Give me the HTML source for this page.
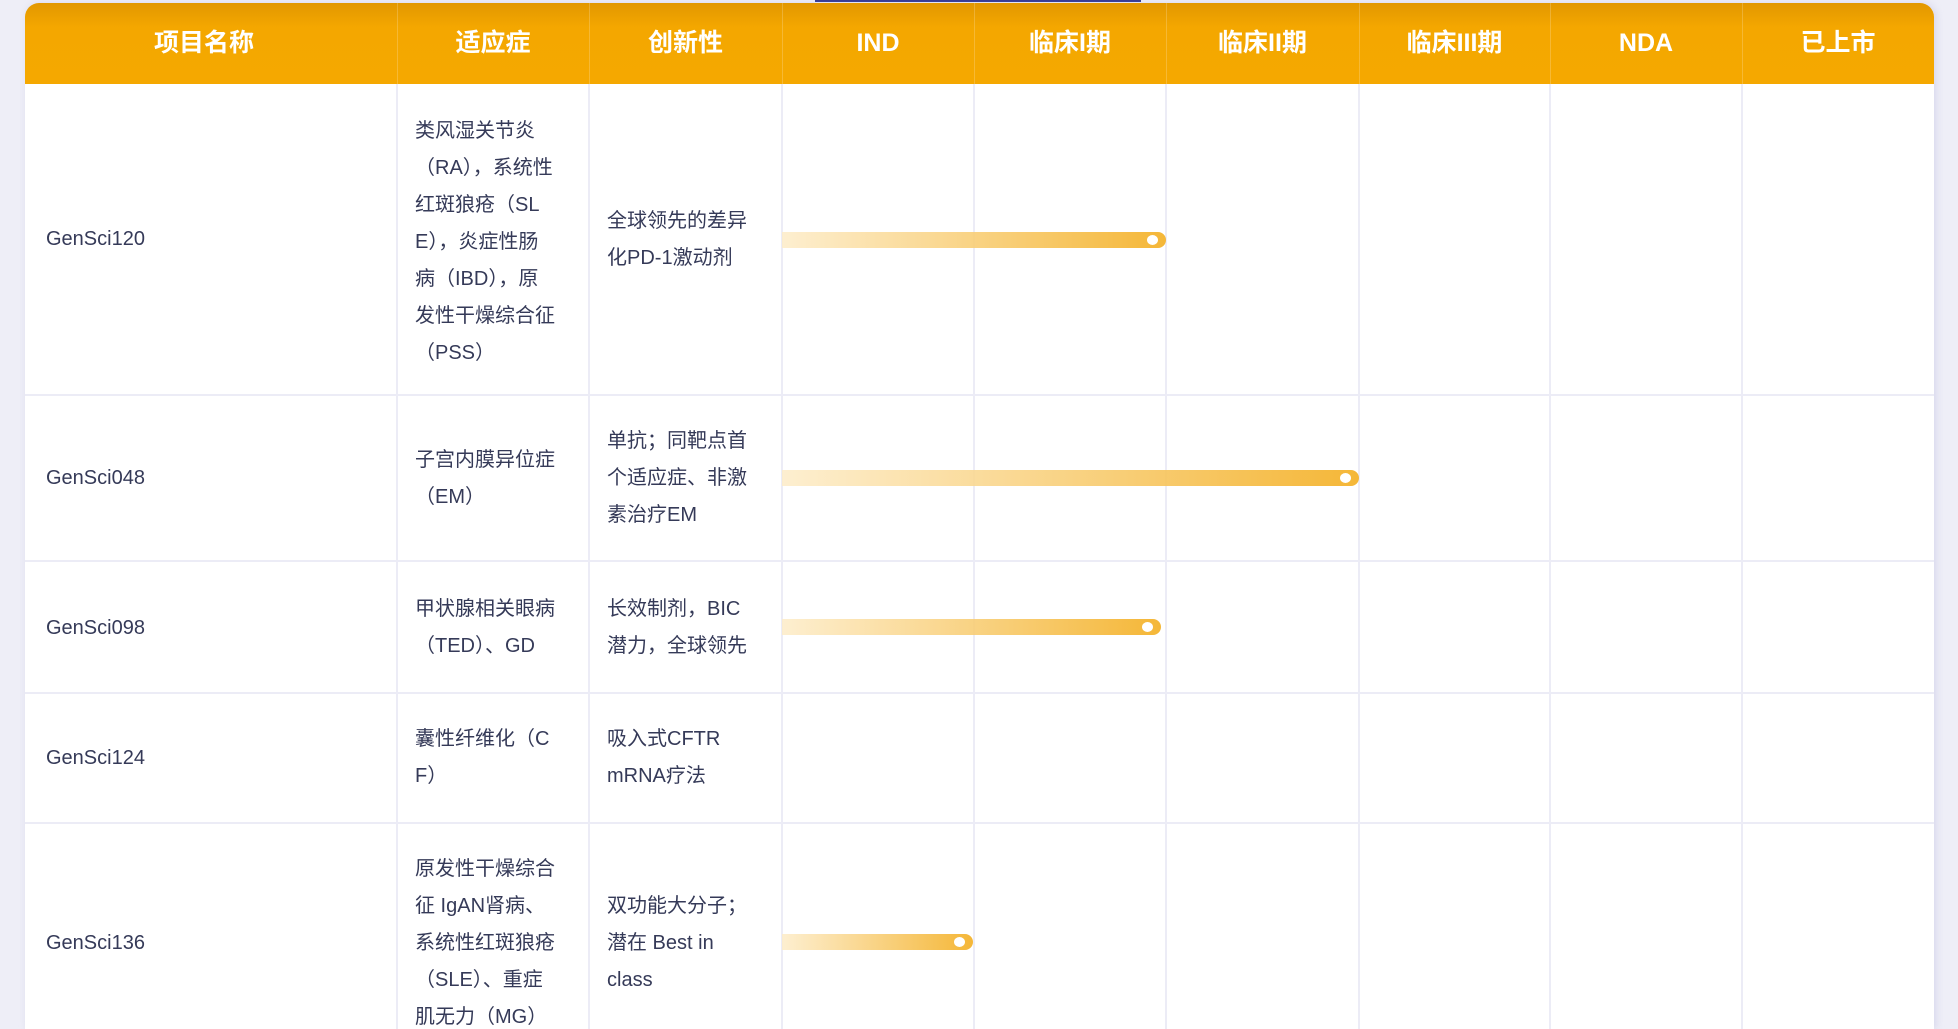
<!DOCTYPE html>
<html><head><meta charset="utf-8"><style>
*{margin:0;padding:0;box-sizing:border-box}
html,body{width:1958px;height:1029px;overflow:hidden}
body{background:#eeeef7;font-family:"Liberation Sans","Noto Sans CJK SC",sans-serif;position:relative}
.topline{position:absolute;left:815px;top:0;width:326px;height:2px;background:#2a2f8a}
.card{position:absolute;left:25px;top:3px;width:1909px;height:1026px;background:#fff;border-radius:14px 14px 0 0;overflow:hidden;box-shadow:2px 0 8px rgba(180,180,220,.4)}
.head{position:absolute;left:0;top:0;width:100%;height:81px;background:linear-gradient(#e29700,#f4a700 30%,#f5a800)}
.h{position:absolute;top:0;height:81px;line-height:81px;text-align:center;color:#fff;font-weight:bold;font-size:25px}
.vl{position:absolute;top:81px;width:2px;height:950px;background:#ececf6}
.hv{position:absolute;top:0;width:1px;height:81px;background:rgba(255,255,255,.2)}
.hl{position:absolute;left:0;width:100%;height:2px;background:#ececf6}
.t{position:absolute;color:#353a58;font-size:20px;line-height:37px}
.bar{position:absolute;left:757px;height:16px;border-radius:0 8px 8px 0;background:linear-gradient(90deg,rgba(253,236,200,.85),rgba(244,179,45,.95))}
.bar i{position:absolute;right:8px;top:3px;width:11px;height:10px;border-radius:50%;background:#fff}
</style></head><body>
<div class="topline"></div>
<div class="card">
<div class="head"></div>
<div class="h" style="left:-7px;width:372px">项目名称</div>
<div class="h" style="left:372px;width:192px">适应症</div>
<div class="h" style="left:564px;width:193px">创新性</div>
<div class="h" style="left:757px;width:192px">IND</div>
<div class="h" style="left:949px;width:192px">临床I期</div>
<div class="h" style="left:1141px;width:193px">临床II期</div>
<div class="h" style="left:1334px;width:191px">临床III期</div>
<div class="h" style="left:1525px;width:192px">NDA</div>
<div class="h" style="left:1717px;width:192px">已上市</div>
<div class="hv" style="left:372px"></div><div class="hv" style="left:564px"></div><div class="hv" style="left:757px"></div><div class="hv" style="left:949px"></div><div class="hv" style="left:1141px"></div><div class="hv" style="left:1334px"></div><div class="hv" style="left:1525px"></div><div class="hv" style="left:1717px"></div>
<div class="vl" style="left:371px"></div><div class="vl" style="left:563px"></div><div class="vl" style="left:756px"></div><div class="vl" style="left:948px"></div><div class="vl" style="left:1140px"></div><div class="vl" style="left:1333px"></div><div class="vl" style="left:1524px"></div><div class="vl" style="left:1716px"></div>
<div class="hl" style="top:391px"></div><div class="hl" style="top:557px"></div><div class="hl" style="top:689px"></div><div class="hl" style="top:819px"></div>

<div class="t" style="left:21px;top:218px">GenSci120</div>
<div class="t" style="left:390px;top:110px">类风湿关节炎<br>（RA），系统性<br>红斑狼疮（SL<br>E），炎症性肠<br>病（IBD），原<br>发性干燥综合征<br>（PSS）</div>
<div class="t" style="left:582px;top:200px">全球领先的差异<br>化PD-1激动剂</div>
<div class="bar" style="top:229px;width:384px"><i></i></div>

<div class="t" style="left:21px;top:457px">GenSci048</div>
<div class="t" style="left:390px;top:439px">子宫内膜异位症<br>（EM）</div>
<div class="t" style="left:582px;top:420px">单抗；同靶点首<br>个适应症、非激<br>素治疗EM</div>
<div class="bar" style="top:467px;width:577px"><i></i></div>

<div class="t" style="left:21px;top:607px">GenSci098</div>
<div class="t" style="left:390px;top:588px">甲状腺相关眼病<br>（TED）、GD</div>
<div class="t" style="left:582px;top:588px">长效制剂，BIC<br>潜力，全球领先</div>
<div class="bar" style="top:616px;width:379px"><i></i></div>

<div class="t" style="left:21px;top:737px">GenSci124</div>
<div class="t" style="left:390px;top:718px">囊性纤维化（C<br>F）</div>
<div class="t" style="left:582px;top:718px">吸入式CFTR<br>mRNA疗法</div>

<div class="t" style="left:21px;top:922px">GenSci136</div>
<div class="t" style="left:390px;top:848px">原发性干燥综合<br>征 IgAN肾病、<br>系统性红斑狼疮<br>（SLE）、重症<br>肌无力（MG）</div>
<div class="t" style="left:582px;top:885px">双功能大分子；<br>潜在 Best in<br>class</div>
<div class="bar" style="top:931px;width:191px"><i></i></div>
</div>
</body></html>
